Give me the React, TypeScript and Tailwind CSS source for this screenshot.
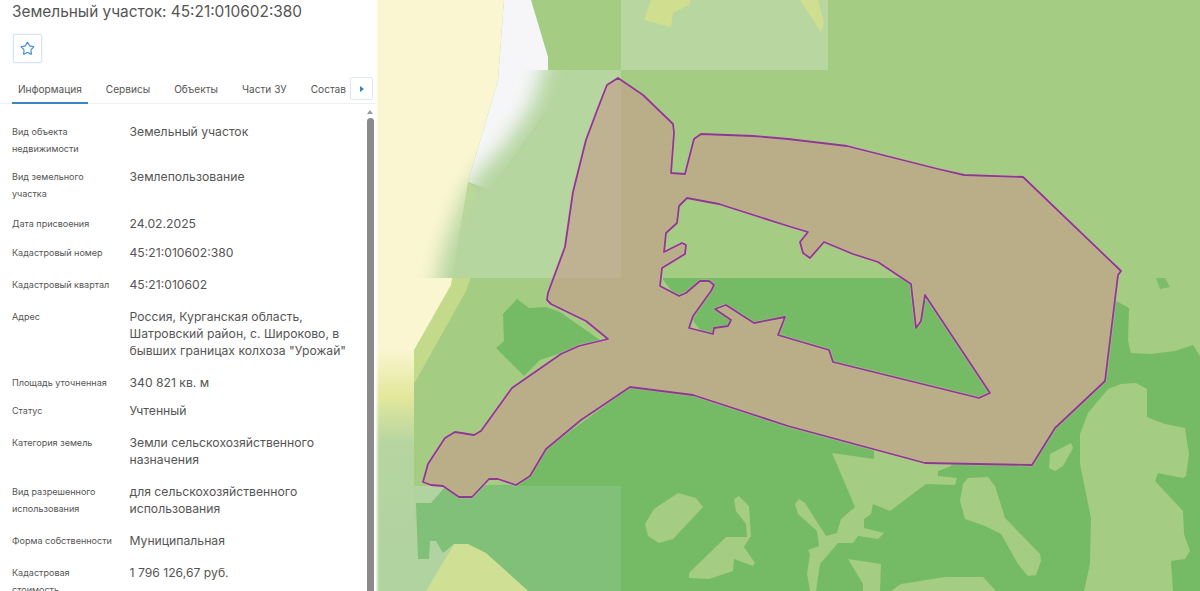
import { Star } from 'lucide-react'

const rows = [
  { label: ['Вид объекта', 'недвижимости'], value: ['Земельный участок'], gap: 'mt-0' },
  { label: ['Вид земельного', 'участка'], value: ['Землепользование'], gap: 'mt-[11px]' },
  { label: ['Дата присвоения'], value: ['24.02.2025'], gap: 'mt-[13px]' },
  { label: ['Кадастровый номер'], value: ['45:21:010602:380'], gap: 'mt-[12px]' },
  { label: ['Кадастровый квартал'], value: ['45:21:010602'], gap: 'mt-[15px]' },
  {
    label: ['Адрес'],
    value: ['Россия, Курганская область,', 'Шатровский район, с. Широково, в', 'бывших границах колхоза "Урожай"'],
    gap: 'mt-[15px]',
  },
  { label: ['Площадь уточненная'], value: ['340 821 кв. м'], gap: 'mt-[15px]' },
  { label: ['Статус'], value: ['Учтенный'], gap: 'mt-[11px]' },
  { label: ['Категория земель'], value: ['Земли сельскохозяйственного', 'назначения'], gap: 'mt-[15px]' },
  { label: ['Вид разрешенного', 'использования'], value: ['для сельскохозяйственного', 'использования'], gap: 'mt-[15px]' },
  { label: ['Форма собственности'], value: ['Муниципальная'], gap: 'mt-[15px]' },
  { label: ['Кадастровая', 'стоимость'], value: ['1 796 126,67 руб.'], gap: 'mt-[15px]' },
]

const tabs = ['Информация', 'Сервисы', 'Объекты', 'Части ЗУ', 'Состав']

const PARCEL =
  'M618 78 L643 95 L673 124 L674 133 L671 173 L685 174 L694 139 L701 134 L753 136 L788 139 L847 146 L938 169 L964 175 L1023 177 L1121 271 L1118 275 L1116 291 L1105 381 L1071 413 L1055 428 L1032 465 L925 463 L788 426 L693 395 L630 387 L581 420 L546 449 L530 476 L516 485 L498 479 L489 479 L472 497 L459 497 L443 486 L431 485 L423 482 L428 464 L445 438 L455 432 L474 435 L481 431 L512 388 L561 354 L579 346 L608 339 L586 321 L551 304 L547 300 L548 293 L565 247 L573 192 L586 140 L598 108 L607 85 Z ' +
  'M687 198 L719 204 L788 226 L808 232 L800 242 L803 253 L810 258 L824 242 L853 254 L878 262 L911 284 L916 328 L921 321 L925 295 L990 393 L979 398 L833 362 L829 350 L788 338 L778 335 L785 317 L754 323 L726 305 L715 309 L731 320 L728 326 L714 328 L713 334 L689 328 L693 316 L711 291 L714 285 L709 281 L700 281 L686 293 L679 296 L660 286 L662 268 L685 254 L686 245 L682 243 L664 252 L666 233 L677 223 L679 206 Z'

const meadowPatches = [
  '678,493 696,498 703,507 673,539 659,543 648,536 645,524 654,509',
  '739,496 749,506 751,536 744,547 755,563 753,566 734,559 733,571 709,579 689,578 689,573 726,537 747,537 746,524 736,511 734,499',
  '832,453 874,459 874,450 951,460 951,466 938,471 938,476 957,478 955,485 926,484 890,511 873,504 871,514 864,519 864,528 884,533 878,539 858,536 853,543 838,543 820,564 816,591 810,591 807,574 810,554 808,550 819,546 817,531 798,514 795,504 799,499 805,503 826,536 837,533 841,519 855,507',
  '848,559 881,564 880,591 863,591 863,584',
  '968,478 988,477 995,486 1005,518 1040,554 1041,561 1036,575 1028,576 1018,564 1001,534 985,526 965,519 960,501 963,484',
  '891,591 901,584 945,577 983,577 996,591',
  '1071,443 1073,448 1063,466 1055,471 1049,468 1050,454',
  '1136,383 1147,389 1147,417 1165,424 1185,428 1189,454 1186,476 1183,478 1158,473 1155,481 1183,511 1184,534 1190,551 1185,559 1171,561 1173,591 1084,591 1090,564 1091,518 1080,464 1080,434 1088,413 1108,389 1121,384',
]

function CadastreMap() {
  return (
    <svg viewBox="376 0 824 591" className="block h-full w-full">
      <defs>
        <filter id="soft" x="-30%" y="-30%" width="160%" height="160%">
          <feGaussianBlur stdDeviation="10" />
        </filter>
        <clipPath id="tile">
          <rect x="376" y="70" width="245" height="208" />
        </clipPath>
        <clipPath id="parcel">
          <path d={PARCEL} clipRule="evenodd" />
        </clipPath>
        <linearGradient id="strip" x1="0" y1="0" x2="0" y2="1">
          <stop offset="0" stopColor="#faf6d1" />
          <stop offset="0.59" stopColor="#faf6d1" />
          <stop offset="0.67" stopColor="#e3e89c" />
          <stop offset="0.75" stopColor="#b6d5a0" />
          <stop offset="1" stopColor="#b0d3a0" />
        </linearGradient>
        <linearGradient id="edge" x1="0" y1="0" x2="1" y2="0">
          <stop offset="0" stopColor="#ffffff" stopOpacity="0.8" />
          <stop offset="1" stopColor="#ffffff" stopOpacity="0" />
        </linearGradient>
      </defs>

      <rect x="376" y="0" width="824" height="591" fill="#a5cc83" />

      {/* shore */}
      <polygon points="376,0 504,0 498,80 468,182 483,197 471,277 451,291 434,333 414,359 376,359" fill="#faf6d1" />
      <polygon points="468,182 483,197 471,277 466,291 414,384 414,350 451,285" fill="#c4da8b" />
      <polygon points="504,0 531,0 548,57 548,70 575,70 490,190 468,182 498,80" fill="#f6f6f8" />

      {/* top raster tile */}
      <rect x="621" y="0" width="207" height="70" fill="#b7d6a0" />
      <polygon points="651,0 691,0 689,5 673,13 671,27 644,20" fill="#cfdf8f" />
      <polygon points="800,0 818,0 824,23 821,32" fill="#cfdf8f" />

      {/* blurred raster tile */}
      <g clipPath="url(#tile)">
        <polygon
          points="552,40 660,40 660,310 430,310 445,245 465,192 482,168 505,145 532,105"
          fill="#b6d6a0"
          filter="url(#soft)"
        />
        <rect x="575" y="70" width="46" height="208" fill="#b6d6a0" />
      </g>

      {/* forest */}
      <polygon points="517,299 529,308 546,307 560,312 600,340 540,360 524,376 496,348 504,341 503,314" fill="#75bb65" />
      <polygon
        points="662,278 1116,278 1116,301 1129,308 1128,341 1131,353 1151,354 1175,351 1193,345 1200,356 1200,591 416,591 416,503 431,503 446,491 460,486 516,485 546,449 630,387 700,330"
        fill="#75bb65"
      />
      <rect x="414" y="486" width="207" height="105" fill="#80c078" />
      <polygon points="414,486 446,486 431,503 414,503" fill="#b0d3a0" />
      <polygon points="414,503 416,503 418,559 429,559 430,541 436,541 443,553 454,544 428,591 414,591" fill="#b0d3a0" />
      <polygon points="454,544 468,544 486,553 526,589 528,591 426,591" fill="#cfe094" />
      {meadowPatches.map((points) => (
        <polygon key={points} points={points} fill="#a5cc83" />
      ))}
      <polygon points="1156,278 1165,278 1170,287 1160,289" fill="#7bbd6b" />

      {/* west strip */}
      <rect x="376" y="0" width="38" height="591" fill="url(#strip)" />

      {/* parcel */}
      <path d={PARCEL} fill="#b9ae87" fillRule="evenodd" />
      <rect x="535" y="70" width="86" height="208" fill="#bfb292" clipPath="url(#parcel)" />
      <path d={PARCEL} fill="none" stroke="#e4a9c4" strokeWidth="3.2" strokeOpacity="0.5" strokeLinejoin="round" />
      <path d={PARCEL} fill="none" stroke="#8a3c8c" strokeWidth="1.8" strokeLinejoin="round" />

      <rect x="376" y="0" width="3" height="591" fill="url(#edge)" />
    </svg>
  )
}

export default function App() {
  return (
    <div className="flex h-[591px] w-[1200px] overflow-hidden bg-white font-['Inter',sans-serif]">
      <aside className="relative h-full w-[376px] shrink-0 overflow-hidden">
        <h1 className="mt-[2px] pl-3 text-[15.4px] leading-[19px] text-[#555]">
          Земельный участок: 45:21:010602:380
        </h1>

        <button
          type="button"
          className="ml-[13px] mt-[13px] flex h-[29px] w-[29px] items-center justify-center rounded-[2px] border border-[#d9e6f2] shadow-[0_0_2px_rgba(60,120,180,0.2)]"
        >
          <Star className="size-[15px] text-[#3a8bd8]" strokeWidth={1.8} />
        </button>

        <div className="relative mt-[15px] flex h-[26px] border-b border-[#eef0f2] pl-3">
          {tabs.map((tab, i) => (
            <span
              key={tab}
              className={`mr-3 h-[26px] whitespace-nowrap px-[6px] text-[10.1px] leading-[22px] text-[#555] ${
                i === 0 ? 'border-b-2 border-[#3a86c4]' : ''
              }`}
            >
              {tab}
            </span>
          ))}
          <span className="absolute right-[3px] top-[-1px] flex h-[23px] w-[23px] items-center justify-center rounded-[2px] border border-[#dfe8f0] bg-white">
            <span className="h-0 w-0 border-y-[3px] border-l-[4px] border-y-transparent border-l-[#2f86c9]" />
          </span>
        </div>

        <div className="mt-[19px] pl-3 pr-[30px]">
          {rows.map((row) => (
            <div key={row.label[0]} className={`flex ${row.gap}`}>
              <div className="w-[117.5px] shrink-0 text-[9.05px] leading-[17px] text-[#555]">
                {row.label.map((line) => (
                  <div key={line}>{line}</div>
                ))}
              </div>
              <div className="whitespace-nowrap text-[12.2px] leading-[17px] text-[#555]">
                {row.value.map((line) => (
                  <div key={line}>{line}</div>
                ))}
              </div>
            </div>
          ))}
        </div>

        {/* scrollbar */}
        <div className="absolute right-[2px] top-[118px] bottom-0 w-[7px] rounded-t-[4px] bg-[#8a8a8a]" />
        <div className="absolute right-[3px] top-[110px] h-0 w-0 border-x-[3px] border-b-[4px] border-x-transparent border-b-[#9a9a9a]" />
      </aside>

      <main className="h-full min-w-0 flex-1">
        <CadastreMap />
      </main>
    </div>
  )
}
